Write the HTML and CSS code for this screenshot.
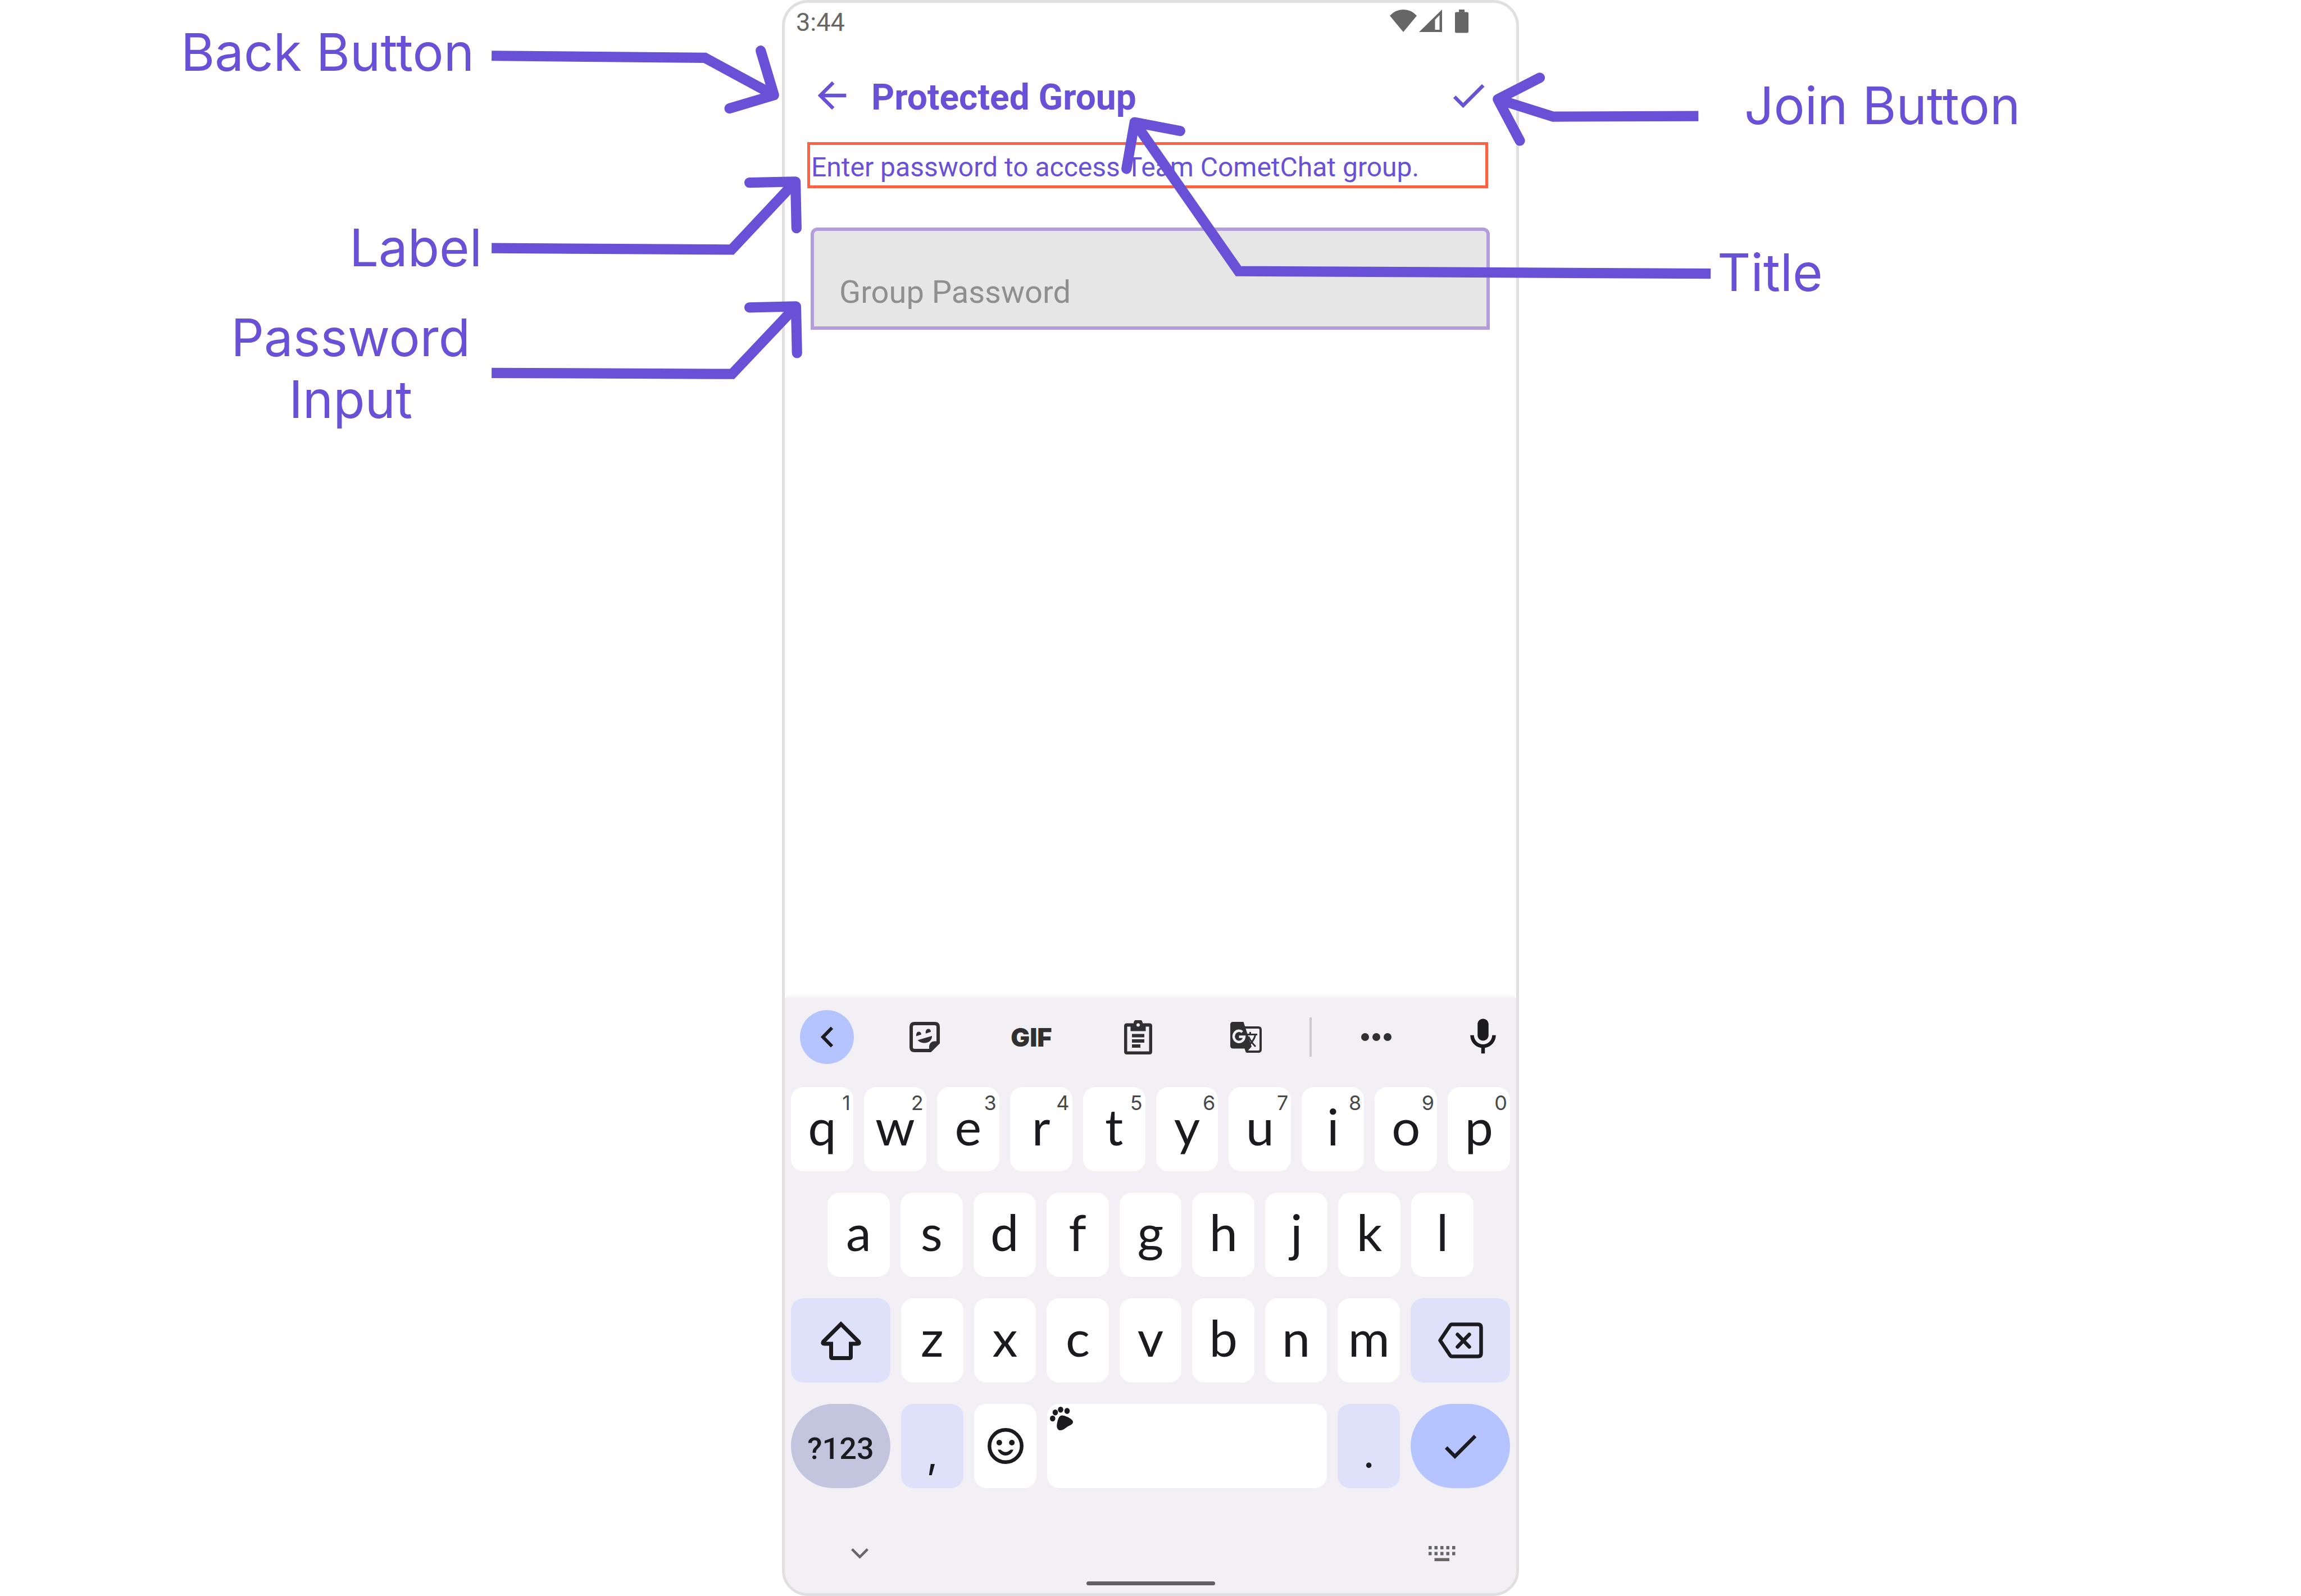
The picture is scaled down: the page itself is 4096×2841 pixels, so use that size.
FILE: index.html
```html
<!DOCTYPE html>
<html lang="en">
<head>
<meta charset="utf-8">
<title>Protected Group</title>
<link rel="stylesheet" href="styles.css">
</head>
<body>
<main class="board">
  <section class="notes notes-left">
    <p class="note note-back">Back Button</p>
    <p class="note note-label">Label</p>
    <p class="note note-password">Password<br>Input</p>
  </section>

  <section class="phone">
    <div class="status">
      <span class="clock">3:44</span>
      <svg class="wifi" width="48" height="40" viewBox="0 0 48 40"><path d="M24 40L0 11Q10 0 24 0T48 11z"/></svg>
      <svg class="signal" width="41" height="40" viewBox="0 0 41 40"><path fill-rule="evenodd" d="M0 40L41 0V40zM28.500 18V36H36.500V10z"/></svg>
      <svg class="battery" width="24" height="42" viewBox="0 0 24 42"><path d="M7 0H17V4.500H21.500Q24 4.500 24 7V39Q24 41.500 21.500 41.500H2.500Q0 41.500 0 39V7Q0 4.500 2.500 4.500H7z"/></svg>
    </div>

    <header class="appbar">
      <button class="icon-button" type="button" aria-label="Back"><svg width="76" height="76" viewBox="0 0 24 24"><path d="M20 11H7.830l5.590-5.590L12 4l-8 8 8 8 1.410-1.410L7.830 13H20z"/></svg></button>
      <h1 class="title">Protected Group</h1>
      <button class="icon-button" type="button" aria-label="Join"><svg width="76" height="76" viewBox="0 0 24 24"><path d="M9 16.170L4.830 12l-1.420 1.410L9 19 21 7l-1.410-1.410z"/></svg></button>
    </header>

    <form class="form">
      <label class="prompt" for="password">Enter password to access Team CometChat group.</label>
      <input class="password" id="password" type="password" placeholder="Group Password">
    </form>

    <div class="keyboard">
      <div class="toolbar">
        <button class="tool tool-back" type="button" aria-label="Collapse toolbar"><svg width="27" height="38" viewBox="0 0 27 38"><path class="line" stroke-width="6" d="M22 2.500L6 19L22 35.500"/></svg></button>
        <div class="tool-group">
          <button class="tool" type="button" aria-label="Stickers"><svg width="54" height="54" viewBox="0 0 54 54"><path class="line" stroke-width="6" d="M37 51H9Q3 51 3 45V9Q3 3 9 3H45Q51 3 51 9V37z"/><path d="M35 51V43.500A9 9 0 0 1 44 34.500H51L38 52zM12 25.500C11.500 21 13.500 17.500 16.500 17.500S21 20 21 22.500zM29 20.800C28 16 30.500 12.600 33.600 12.600S38 15 38 17.800zM14.500 32.500L40 25C40.500 32 34.500 37.500 27 37.500C21.500 37.500 17 35.500 14.500 32.500z"/></svg></button>
          <button class="tool tool-gif" type="button">GIF</button>
          <button class="tool" type="button" aria-label="Clipboard"><svg width="50" height="61" viewBox="0 0 50 61"><path fill-rule="evenodd" d="M5 5.500H17A8 8 0 0 1 33 5.500H45Q50 5.500 50 10.500V56Q50 61 45 61H5Q0 61 0 56V10.500Q0 5.500 5 5.500zM5.500 11.500V55.500H44.500V11.500H38.500V19.500H11.500V11.500zM25 5.500A3 3 0 0 0 25 11.500A3 3 0 0 0 25 5.500zM14 24.500H36V30.500H14zM14 34H36V40H14zM14 43H29V49H14z"/></svg></button>
          <button class="tool" type="button" aria-label="Translate"><svg width="56" height="55" viewBox="0 0 56 55"><path class="line" stroke-width="4" d="M25 10H50Q54 10 54 14V49Q54 53 50 53H29"/><path d="M5 0H23.500L38 44L28 55L25.500 47.500H5Q0 47.500 0 42.500V5Q0 0 5 0z"/><path class="cut" stroke-width="4.500" d="M21.500 18A9.500 10 0 1 0 25 26.500H15.500"/><path class="line" stroke-width="3" d="M29 22.500H48M35.500 18V23M44.500 24Q41.500 34 33.500 41M32.500 26Q36 35 45 44"/></svg></button>
        </div>
        <span class="divider"></span>
        <button class="tool" type="button" aria-label="More"><svg width="54" height="14" viewBox="0 0 54 14"><circle cx="7" cy="7" r="7"/><circle cx="27" cy="7" r="7"/><circle cx="47" cy="7" r="7"/></svg></button>
        <button class="tool tool-mic" type="button" aria-label="Voice input"><svg width="78" height="78" viewBox="0 0 24 24"><path d="M12 14c1.660 0 3-1.340 3-3V5c0-1.660-1.340-3-3-3S9 3.340 9 5v6c0 1.660 1.340 3 3 3zM17 11c0 2.760-2.240 5-5 5s-5-2.240-5-5H5c0 3.530 2.610 6.430 6 6.920V21h2v-3.080c3.390-.49 6-3.390 6-6.920z"/></svg></button>
      </div>

      <div class="keys">
        <div class="row">
          <button class="key" type="button">q<span class="hint">1</span></button>
          <button class="key" type="button">w<span class="hint">2</span></button>
          <button class="key" type="button">e<span class="hint">3</span></button>
          <button class="key" type="button">r<span class="hint">4</span></button>
          <button class="key" type="button">t<span class="hint">5</span></button>
          <button class="key" type="button">y<span class="hint">6</span></button>
          <button class="key" type="button">u<span class="hint">7</span></button>
          <button class="key" type="button">i<span class="hint">8</span></button>
          <button class="key" type="button">o<span class="hint">9</span></button>
          <button class="key" type="button">p<span class="hint">0</span></button>
        </div>
        <div class="row row-inset">
          <button class="key" type="button">a</button>
          <button class="key" type="button">s</button>
          <button class="key" type="button">d</button>
          <button class="key" type="button">f</button>
          <button class="key" type="button">g</button>
          <button class="key" type="button">h</button>
          <button class="key" type="button">j</button>
          <button class="key" type="button">k</button>
          <button class="key" type="button">l</button>
        </div>
        <div class="row">
          <button class="key key-wide key-tint" type="button" aria-label="Shift"><svg width="72" height="69" viewBox="0 0 72 69"><path class="line" stroke-width="7" d="M36 5L67.500 36.500Q69.500 40 65.500 40H53.500V63Q53.500 65.500 51 65.500H21Q18.500 65.500 18.500 63V40H6.500Q2.500 40 4.500 36.500z"/></svg></button>
          <button class="key" type="button">z</button>
          <button class="key" type="button">x</button>
          <button class="key" type="button">c</button>
          <button class="key" type="button">v</button>
          <button class="key" type="button">b</button>
          <button class="key" type="button">n</button>
          <button class="key" type="button">m</button>
          <button class="key key-wide key-tint" type="button" aria-label="Delete"><svg width="80" height="64" viewBox="0 0 80 64"><path class="line" stroke-width="6.500" stroke-linejoin="round" d="M24 3.500H71Q76.500 3.500 76.500 9V55Q76.500 60.500 71 60.500H24Q22.500 60.500 21.500 59L3.500 32L21.500 5Q22.500 3.500 24 3.500z"/><path class="line" stroke-width="6.500" stroke-linecap="round" d="M34.500 21.500L55.500 43.500M55.500 21.500L34.500 43.500"/></svg></button>
        </div>
        <div class="row">
          <button class="key key-wide key-symbols" type="button">?123</button>
          <button class="key key-fixed key-tint key-punct" type="button">,</button>
          <button class="key key-fixed key-icon" type="button" aria-label="Emoji"><svg width="64" height="64" viewBox="0 0 64 64"><circle class="line" stroke-width="6.500" cx="32" cy="32" r="28.700"/><circle cx="20.800" cy="26" r="5"/><circle cx="43.200" cy="26" r="5"/><path d="M18 38.500H23Q32 47 41 38.500H46Q42 49 32 49T18 38.500z"/></svg></button>
          <button class="key key-space" type="button" aria-label="Space"><svg width="42" height="42" viewBox="0 0 42 42"><ellipse cx="4.800" cy="21" rx="4.800" ry="5.300"/><ellipse cx="9.500" cy="10.300" rx="4.800" ry="5.300"/><ellipse cx="19" cy="5.300" rx="4.800" ry="5.300"/><ellipse cx="30.500" cy="7.600" rx="4.800" ry="5.300"/><path d="M22 15.500C28 16 41 22 41 27C41 32 36 32.500 32 35S24 42 18.500 42S11.500 36 12.500 31S15 15 22 15.500z"/></svg></button>
          <button class="key key-fixed key-tint key-punct" type="button">.</button>
          <button class="key key-wide key-enter" type="button" aria-label="Done"><svg width="77" height="77" viewBox="0 0 24 24"><path d="M9 16.170L4.830 12l-1.420 1.410L9 19 21 7l-1.410-1.410z"/></svg></button>
        </div>
      </div>

      <div class="nav">
        <button class="icon-button" type="button" aria-label="Hide keyboard"><svg width="31" height="19" viewBox="0 0 31 19"><path class="line" stroke-width="4.500" d="M1.600 1.600L15.500 15.500L29.400 1.600"/></svg></button>
        <button class="icon-button" type="button" aria-label="Switch keyboard"><svg width="48" height="27" viewBox="0 0 48 27"><path d="M0 0H5.500V6H0zM10.500 0H16V6H10.500zM21 0H26.500V6H21zM31.500 0H37V6H31.500zM42 0H47.500V6H42zM0 10.500H5.500V16.500H0zM10.500 10.500H16V16.500H10.500zM21 10.500H26.500V16.500H21zM31.500 10.500H37V16.500H31.500zM42 10.500H47.500V16.500H42zM10.500 21.500H37V27H10.500z"/></svg></button>
      </div>
      <div class="home"></div>
    </div>
  </section>

  <section class="notes notes-right">
    <p class="note note-join">Join Button</p>
    <p class="note note-title">Title</p>
  </section>

  <svg class="arrows" viewBox="0 0 4498 3120" aria-hidden="true">
    <g class="shafts">
      <path d="M961 109L1378 113L1513 186"/>
      <path d="M961 485L1430 488L1555 355"/>
      <path d="M961 729L1431 731L1556 599"/>
      <path d="M3320 227L3036 228L2928 194"/>
      <path d="M3344 535L2421 530L2218 239"/>
    </g>
    <g class="heads">
      <path d="M1487 99L1513 186L1426 212"/>
      <path d="M1465 357L1555 355L1557 446"/>
      <path d="M1465 601L1556 599L1558 690"/>
      <path d="M3010 152L2928 194L2971 275"/>
      <path d="M2307 256L2218 239L2202 330"/>
    </g>
  </svg>
</main>
</body>
</html>
```

FILE: styles.css
```css
* {
  box-sizing: border-box;
}

body {
  margin: 0;
  background: #fff;
  font-family: Roboto, "Liberation Sans", sans-serif;
}

button {
  display: flex;
  align-items: center;
  justify-content: center;
  margin: 0;
  padding: 0;
  border: 0;
  background: none;
  color: inherit;
  font: inherit;
}

svg {
  display: block;
  fill: currentColor;
}

.line {
  fill: none;
  stroke: currentColor;
}

.cut {
  fill: none;
  stroke: #f2f0f5;
}

.board {
  position: relative;
  display: grid;
  grid-template-columns: 1fr minmax(0, 1312px) 1fr;
  min-height: 100vh;
  overflow: hidden;
}

/* Callouts */

.notes {
  display: flex;
  flex-direction: column;
  color: #6851d6;
  font-family: Inter, "Liberation Sans", sans-serif;
  font-size: 92px;
  line-height: 110px;
}

.notes-left {
  align-items: flex-end;
  padding-top: 38px;
  text-align: center;
}

.notes-right {
  align-items: flex-start;
  padding-top: 133px;
}

.note {
  margin: 0;
}

.note-back {
  margin-right: 548px;
}

.note-label {
  margin: 238px 534px 0 0;
}

.note-password {
  margin: 50px 555px 0 0;
}

.note-join {
  margin-left: 401px;
}

.note-title {
  margin: 187px 0 0 353px;
}

.arrows {
  position: absolute;
  top: 0;
  left: 0;
  width: 100%;
  fill: none;
  stroke: #6851d6;
  stroke-width: 20;
  pointer-events: none;
}

.heads {
  stroke-linecap: round;
  stroke-linejoin: round;
}

/* Phone */

.phone {
  display: flex;
  flex-direction: column;
  overflow: hidden;
  border: 5px solid #e0e0e0;
  border-radius: 46px;
  background: #fff;
}

.status {
  display: flex;
  align-items: flex-start;
  padding: 12px 85px 0 20px;
  color: #666;
  font-size: 45px;
  line-height: 46px;
}

.clock {
  margin-right: auto;
}

.signal {
  margin-left: 4px;
}

.battery {
  margin-left: 23px;
}

.appbar {
  display: flex;
  align-items: flex-start;
  padding: 69px 47px 0 46px;
  color: #6851d6;
}

.title {
  flex: 1;
  margin: 0;
  padding: 4px 0 0 32px;
  font-size: 64px;
  font-weight: 700;
  line-height: 76px;
}

.form {
  display: flex;
  flex-direction: column;
  margin-top: 41px;
}

.prompt {
  margin: 0 50px 0 40px;
  padding: 7px 0 0 2px;
  border: 5px solid #ff6242;
  color: #6851d6;
  font-size: 48px;
  line-height: 65px;
}

.password {
  height: 182px;
  margin: 70px 47px 0 46px;
  padding: 48px 45px 0;
  border: 6px solid #b39ddb;
  border-radius: 12px 12px 0 0;
  outline: 0;
  background: #e6e6e6;
  color: #333;
  font-family: inherit;
  font-size: 56px;
}

.password::placeholder {
  color: #8f8f8f;
  opacity: 1;
}

/* Keyboard */

.keyboard {
  margin-top: auto;
  padding: 22px 11px 14px;
  background: #f2f0f5;
  box-shadow: 0 -2px 6px rgba(0, 0, 0, 0.06);
  color: #1b1b1f;
}

.toolbar {
  display: flex;
  align-items: center;
  padding-left: 16px;
  color: #303030;
}

.tool {
  width: 96px;
  height: 96px;
}

.tool-back {
  border-radius: 50%;
  background: #b5c4ff;
  color: #1b1b1f;
}

.tool-group {
  display: flex;
  gap: 96px;
  margin-left: 78px;
}

.tool-gif {
  width: 92px;
  font-family: Inter, sans-serif;
  font-size: 45px;
  font-weight: 900;
}

.divider {
  width: 4px;
  height: 70px;
  margin: 0 67px 0 65px;
  background: #cbc9ce;
}

.tool-mic {
  margin-left: auto;
  color: #1b1b1f;
}

.keys {
  display: flex;
  flex-direction: column;
  gap: 38px;
  margin-top: 41px;
}

.row {
  display: flex;
  gap: 19px;
}

.row-inset {
  padding: 0 65px;
}

.key {
  position: relative;
  flex: 1;
  height: 150px;
  padding-bottom: 12px;
  border-radius: 22px;
  background: #fff;
  font-family: Lato, "Liberation Sans", sans-serif;
  font-size: 90px;
}

.hint {
  position: absolute;
  top: 6px;
  right: 5px;
  color: #48484a;
  font-family: Inter, "Liberation Sans", sans-serif;
  font-size: 36px;
  line-height: 44px;
}

.key-wide {
  flex: 0 0 177px;
  padding: 0;
}

.key-fixed {
  flex: 0 0 111px;
}

.key-tint {
  background: #dfe0fa;
}

.key-icon {
  padding: 0;
}

.key-punct {
  padding: 24px 0 0;
  font-family: Inter, "Liberation Sans", sans-serif;
  font-size: 72px;
}

.key-symbols {
  padding-top: 8px;
  border-radius: 75px;
  background: #c3c4de;
  font-family: Roboto, sans-serif;
  font-size: 54px;
  font-weight: 500;
}

.key-space {
  align-items: flex-start;
  justify-content: flex-start;
  padding: 5px;
}

.key-enter {
  border-radius: 75px;
  background: #b5c4ff;
}

.nav {
  display: flex;
  justify-content: space-between;
  height: 28px;
  margin-top: 102px;
  padding: 0 97px 0 107px;
  color: #666;
}

.home {
  width: 229px;
  height: 7px;
  margin: 36px auto 0;
  border-radius: 4px;
  background: #606062;
}
```
